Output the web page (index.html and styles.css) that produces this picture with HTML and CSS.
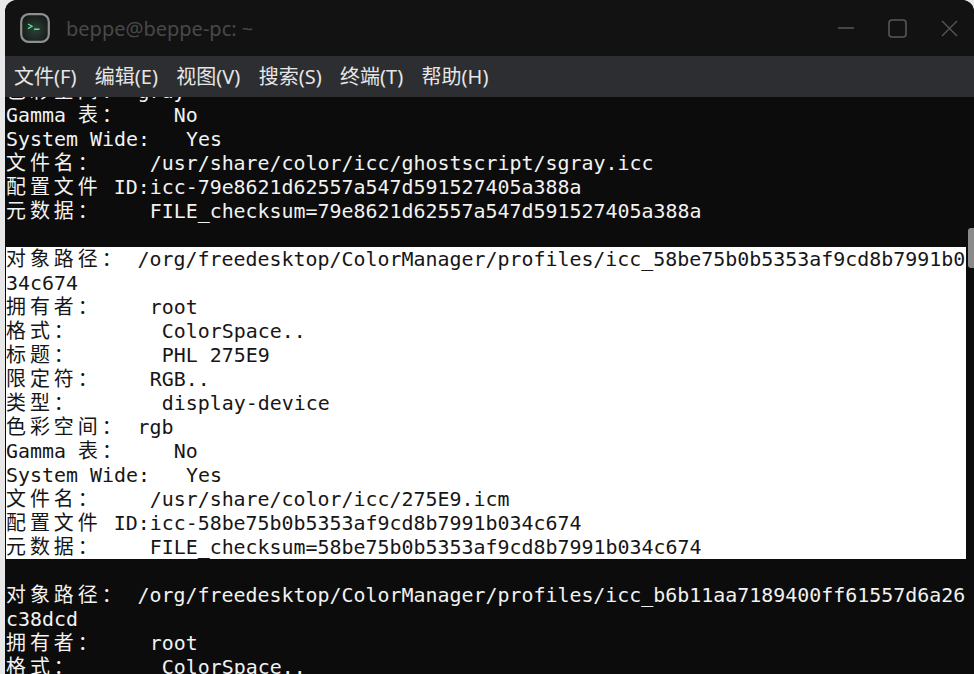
FILE: index.html
```html
<!DOCTYPE html>
<html lang="zh-CN">
<head>
<meta charset="utf-8">
<title>beppe@beppe-pc: ~</title>
<link rel="stylesheet" href="styles.css">
</head>
<body>
<div class="window">
  <header class="titlebar">
    <svg class="app-icon" width="30" height="30" viewBox="0 0 30 30">
      <defs>
        <radialGradient id="glow" cx="50%" cy="55%" r="60%">
          <stop offset="0" stop-color="#2f4038"/>
          <stop offset="1" stop-color="#141816"/>
        </radialGradient>
      </defs>
      <rect x="1.2" y="1.2" width="27.6" height="27.6" rx="7.5" fill="url(#glow)" stroke="#8c9090" stroke-width="2.2"/>
      <path d="M8 11l4 2.3-4 2.3" fill="none" stroke="#5fe09a" stroke-width="1.3"/>
      <path d="M14 16.2h5.5" fill="none" stroke="#5fe09a" stroke-width="1.6"/>
    </svg>
    <span class="title">beppe@beppe-pc: ~</span>
    <div class="controls">
      <svg width="16" height="4" viewBox="0 0 16 4"><path d="M0 2h16" stroke="#55575a" stroke-width="1.4"/></svg>
      <svg width="19" height="19" viewBox="0 0 19 19"><rect x="1" y="1" width="17" height="17" rx="3" fill="none" stroke="#55575a" stroke-width="1.6"/></svg>
      <svg width="17" height="17" viewBox="0 0 17 17"><path d="M1 1l15 15M16 1L1 16" stroke="#55575a" stroke-width="1.4"/></svg>
    </div>
  </header>
  <nav class="menubar">
    <span>文件(F)</span><span>编辑(E)</span><span>视图(V)</span><span>搜索(S)</span><span>终端(T)</span><span>帮助(H)</span>
  </nav>
  <div class="terminal">
    <div class="screen">
      <div class="scrolled">
<pre class="block"><span class="c">色彩空间：</span> gray
Gamma <span class="c">表：</span>    No
System Wide:   Yes
<span class="c">文件名：</span>    /usr/share/color/icc/ghostscript/sgray.icc
<span class="c">配置文件</span> ID:icc-79e8621d62557a547d591527405a388a
<span class="c">元数据：</span>    FILE_checksum=79e8621d62557a547d591527405a388a
 </pre>
<pre class="block selected"><span class="c">对象路径：</span> /org/freedesktop/ColorManager/profiles/icc_58be75b0b5353af9cd8b7991b0
34c674
<span class="c">拥有者：</span>    root
<span class="c">格式：</span>       ColorSpace..
<span class="c">标题：</span>       PHL 275E9
<span class="c">限定符：</span>    RGB..
<span class="c">类型：</span>       display-device
<span class="c">色彩空间：</span> rgb
Gamma <span class="c">表：</span>    No
System Wide:   Yes
<span class="c">文件名：</span>    /usr/share/color/icc/275E9.icm
<span class="c">配置文件</span> ID:icc-58be75b0b5353af9cd8b7991b034c674
<span class="c">元数据：</span>    FILE_checksum=58be75b0b5353af9cd8b7991b034c674</pre>
<pre class="block"> 
<span class="c">对象路径：</span> /org/freedesktop/ColorManager/profiles/icc_b6b11aa7189400ff61557d6a26
c38dcd
<span class="c">拥有者：</span>    root
<span class="c">格式：</span>       ColorSpace..</pre>
      </div>
    </div>
    <div class="scrollbar"><div class="thumb"></div></div>
  </div>
</div>
</body>
</html>
```
FILE: styles.css
```css
html, body { margin: 0; height: 100%; }
body {
  background: #e8e8e8;
  padding-left: 5px;
  box-sizing: border-box;
  width: 974px;
  height: 674px;
  overflow: hidden;
}
.window {
  height: 674px;
  display: flex;
  flex-direction: column;
  border-radius: 12px 12px 0 0;
  overflow: hidden;
  background: #0c0c0c;
}
.titlebar {
  height: 56px;
  flex: none;
  display: flex;
  align-items: center;
  background: #121212;
  padding: 0 16px 0 15px;
}
.app-icon { flex: none; }
.title {
  margin-left: 16px;
  font: 20px "Noto Sans", sans-serif;
  color: #47484a;
}
.controls {
  margin-left: auto;
  display: flex;
  align-items: center;
  gap: 34px;
}
.menubar {
  height: 41px;
  box-sizing: border-box;
  padding: 0 0 2px 9px;
  flex: none;
  display: flex;
  align-items: center;
  gap: 18.4px;
  background: #2d2e31;
  color: #e6e6e6;
  font: 20px "Noto Sans", "Noto Sans CJK SC", sans-serif;
}
.terminal {
  flex: 1;
  min-height: 0;
  display: flex;
}
.screen {
  flex: 1;
  min-width: 0;
  overflow: hidden;
  padding-left: 1px;
}
.scrolled { margin-top: -18px; width: 960px; }
.block {
  margin: 0 0 -1px;
  padding-top: 1px;
  font: 19.93px/24px "DejaVu Sans Mono", "Noto Sans CJK SC", monospace;
  color: #f2f2f2;
  white-space: pre;
}
.selected {
  margin-bottom: 0;
  height: 312px;
  box-sizing: border-box;
  overflow: hidden;
  background: #ffffff;
  color: #161616;
}
.c { letter-spacing: 4px; }
.scrollbar {
  width: 8px;
  flex: none;
  padding-top: 131px;
  box-sizing: border-box;
}
.thumb {
  width: 6px;
  margin-left: 2px;
  height: 40px;
  border-radius: 3px 0 0 3px;
  background: #8a8a8a;
}
```
